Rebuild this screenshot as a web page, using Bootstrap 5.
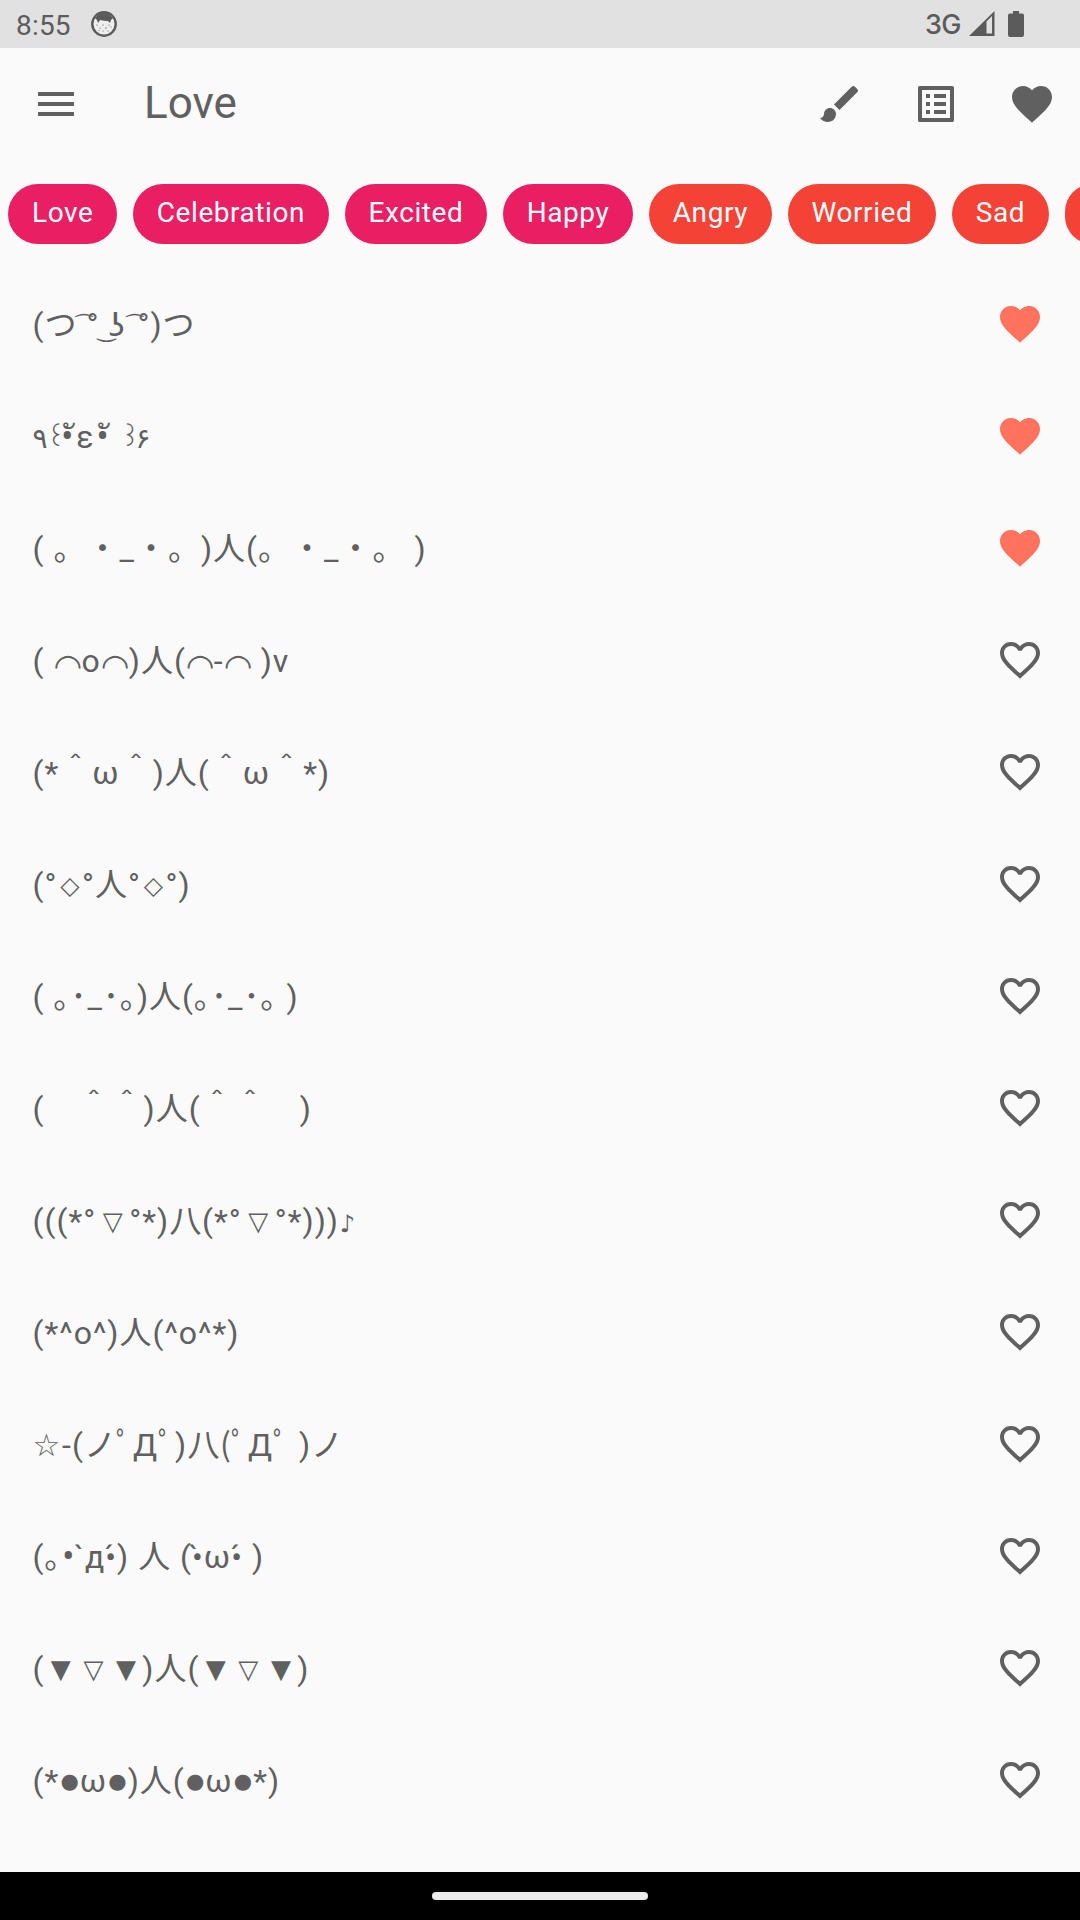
<!DOCTYPE html>
<html lang="en">
<head>
<meta charset="utf-8">
<meta name="viewport" content="width=device-width, initial-scale=1">
<title>Love</title>
<link href="https://cdn.jsdelivr.net/npm/bootstrap@5.3.0/dist/css/bootstrap.min.css" rel="stylesheet">
<style>
body{background:#fafafa;color:#606060;font-family:Roboto,"Noto Sans CJK JP","DejaVu Sans",sans-serif;width:1080px;height:1920px;overflow:hidden}
svg{display:block;fill:currentColor;flex:none}
.statusbar{height:48px;background:#e1e1e1;color:#5b5b5b;padding:0 56px 0 16px}
.clock{font-size:28px;letter-spacing:.2px;line-height:46px;padding-top:3px;width:75px}
.net{font-family:Inter,sans-serif;font-size:27px;font-weight:500;letter-spacing:-.5px;line-height:46px;padding-top:2px;margin-right:8px}
.battery{margin-left:13px}
.appbar{height:112px;padding:0 24px 0 32px}
.title{font-size:44px;line-height:110px;padding-bottom:2px;margin-left:64px}
.actions{gap:48px}
.chips{height:108px;padding:24px 8px;gap:15.5px}
.chip{height:60px;border-radius:30px;line-height:58px;font-size:28px;letter-spacing:.56px;padding:0 24px;color:#fff;background:#e91e63;flex:none;white-space:nowrap}
.chip-r{background:#f44336}
.item{height:112px;padding:0 36px 0 32.6px}
.face{font-size:32px;letter-spacing:1px;line-height:48px;padding-top:2px;white-space:pre;text-spacing-trim:space-all;direction:ltr;unicode-bidi:isolate}
.face span{display:inline-block;line-height:0;text-align:center;letter-spacing:0;white-space:pre}
.fav{color:#ff725e}
.dj{font-family:"DejaVu Sans"}
.face .sc{font-family:"Noto Sans CJK SC";width:33px}
.face .arc{width:28px;font-size:33px;vertical-align:-5px}
.face .dia{width:24.6px;font-size:25px;vertical-align:2px}
.face .ball{width:20.5px;font-size:21px;vertical-align:4px}
.face .star{width:29.5px;font-size:31px;text-align:left}
.face .note{width:17px;font-size:24px}
.face .tri{width:33px;font-size:26px;vertical-align:2px}
.face .tri-s{width:32.6px}
.face .tie{width:9px;font-size:20px;vertical-align:4px;text-align:left}
.face .smile{width:9px;font-size:22px;vertical-align:-1px;text-align:left}
.face .glot{width:20px;text-align:left}
.face .tick{width:11px;margin-left:-1px;text-align:left}
.face .w13{width:13px;font-size:28px}
.face .w15{width:15px;font-size:26px;vertical-align:2px}
.face .w17{width:16px}
.face .w21{width:22px}
.face .w13b{width:14px}
.face .hook{width:0;margin-left:-8px;margin-right:8px;text-align:left}
.face .gap{width:11px}
.face .big{font-size:36px;width:13.400px;vertical-align:-1px}
.home{height:48px}
.pill{width:216px;height:8px;border-radius:4px;background:#ebebeb}
</style>
</head>
<body class="d-flex flex-column">
<svg width="0" height="0" class="position-absolute"><defs>
<path id="full" d="M12 21.35l-1.45-1.32C5.4 15.36 2 12.28 2 8.5 2 5.42 4.42 3 7.5 3c1.74 0 3.41.81 4.5 2.09C13.09 3.81 14.76 3 16.5 3 19.58 3 22 5.42 22 8.5c0 3.78-3.4 6.86-8.55 11.54L12 21.35z"/>
<path id="line" d="M16.5 3c-1.74 0-3.41.81-4.5 2.09C10.91 3.81 9.24 3 7.5 3 4.42 3 2 5.42 2 8.5c0 3.78 3.4 6.86 8.55 11.54L12 21.35l1.45-1.32C18.6 15.36 22 12.28 22 8.5 22 5.42 19.58 3 16.5 3zm-4.4 15.55l-.1.1-.1-.1C7.14 14.24 4 11.39 4 8.5 4 6.5 5.5 5 7.5 5c1.54 0 3.04.99 3.57 2.36h1.87C13.46 5.99 14.96 5 16.5 5c2 0 3.5 1.5 3.5 3.5 0 2.89-3.14 5.74-7.9 10.05z"/>
</defs></svg>
<header class="statusbar d-flex align-items-center flex-shrink-0">
<div class="clock">8:55</div>
<svg width="26" height="26" viewBox="0 0 26 26"><circle cx="13" cy="13" r="11.7" fill="#eee" stroke="#5b5b5b" stroke-width="2.4"/><path d="M4 7Q13-3 22 7l-2 2-1 3-2-2Q13 10 9 9l-2 3-1-3z"/><g><circle cx="6" cy="14" r=".6"/><circle cx="9" cy="17" r=".6"/><circle cx="12" cy="14" r=".6"/><circle cx="15" cy="17" r=".7"/><circle cx="18" cy="14" r=".6"/><circle cx="20" cy="16" r=".5"/><circle cx="12" cy="20" r=".6"/><circle cx="17" cy="20" r=".5"/><circle cx="8" cy="19.500" r=".5"/></g></svg>
<div class="net ms-auto">3G</div>
<svg width="26" height="26" viewBox="0 0 26 26"><path d="M0 25L25.500 0v25zM17.500 10.500V22.500H23V5z" fill-rule="evenodd"/></svg>
<svg class="battery" width="16" height="26" viewBox="0 0 16 26"><path d="M5 0h6v2.500h3q2 0 2 2V24q0 2-2 2H2q-2 0-2-2V4.500q0-2 2-2h3z"/></svg>
</header>
<nav class="appbar d-flex align-items-center flex-shrink-0">
<svg width="48" height="48" viewBox="0 0 24 24"><path d="M3 18h18v-2H3v2zm0-5h18v-2H3v2zm0-7v2h18V6H3z"/></svg>
<div class="title">Love</div>
<div class="actions d-flex ms-auto">
<svg width="48" height="48" viewBox="0 0 24 24"><path d="M7 14c-1.660 0-3 1.340-3 3 0 1.310-1.160 2-2 2 .92 1.220 2.490 2 4 2 2.210 0 4-1.790 4-4 0-1.660-1.340-3-3-3zm13.710-9.370l-1.340-1.340c-.39-.39-1.020-.39-1.410 0L9 12.250 11.750 15l8.960-8.960c.39-.39.39-1.020 0-1.410z"/></svg>
<svg width="48" height="48" viewBox="0 0 24 24"><path d="M19 5v14H5V5h14m1.100-2H3.900c-.5 0-.9.4-.9.9v16.200c0 .4.4.9.9.9h16.200c.4 0 .9-.5.9-.9V3.900c0-.5-.5-.9-.9-.9zM11 7h6v2h-6V7zm0 4h6v2h-6v-2zm0 4h6v2h-6zM7 7h2v2H7zm0 4h2v2H7zm0 4h2v2H7z"/></svg>
<svg width="48" height="48" viewBox="0 0 24 24"><use href="#full"/></svg>
</div>
</nav>
<div class="chips d-flex flex-shrink-0 overflow-hidden">
<div class="chip">Love</div><div class="chip">Celebration</div><div class="chip">Excited</div><div class="chip">Happy</div><div class="chip chip-r">Angry</div><div class="chip chip-r">Worried</div><div class="chip chip-r">Sad</div><div class="chip chip-r">&nbsp;</div>
</div>
<main class="flex-grow-1 overflow-hidden">
<div class="item d-flex align-items-center justify-content-between"><div class="face">(つ<span class="tie dj">&nbsp;͡</span>°<span class="smile dj">&nbsp;͜</span><span class="glot dj">ʖ</span><span class="tie dj">&nbsp;͡</span>°)つ</div><svg class="fav" width="48" height="48" viewBox="0 0 24 24"><use href="#full"/></svg></div>
<div class="item d-flex align-items-center justify-content-between"><div class="face"><span class="w13">٩</span><span class="w15">꒰</span><span class="w17 big">•</span><span class="hook">&nbsp;ั</span><span class="w21">ε</span><span class="w13b big">•</span><span class="hook">&nbsp;ั</span><span class="gap"> </span><span class="w15">꒱</span><span class="w13">۶</span></div><svg class="fav" width="48" height="48" viewBox="0 0 24 24"><use href="#full"/></svg></div>
<div class="item d-flex align-items-center justify-content-between"><div class="face">( 。・_・。)人(。・_・。 )</div><svg class="fav" width="48" height="48" viewBox="0 0 24 24"><use href="#full"/></svg></div>
<div class="item d-flex align-items-center justify-content-between"><div class="face">( <span class="arc dj">◠</span>o<span class="arc dj">◠</span>)人(<span class="arc dj">◠</span>-<span class="arc dj">◠</span> )v</div><svg width="48" height="48" viewBox="0 0 24 24"><use href="#line"/></svg></div>
<div class="item d-flex align-items-center justify-content-between"><div class="face">(*＾ω＾)人(＾ω＾*)</div><svg width="48" height="48" viewBox="0 0 24 24"><use href="#line"/></svg></div>
<div class="item d-flex align-items-center justify-content-between"><div class="face">(°<span class="dia dj">◇</span>°人°<span class="dia dj">◇</span>°)</div><svg width="48" height="48" viewBox="0 0 24 24"><use href="#line"/></svg></div>
<div class="item d-flex align-items-center justify-content-between"><div class="face">( ｡･_･｡)人(｡･_･｡ )</div><svg width="48" height="48" viewBox="0 0 24 24"><use href="#line"/></svg></div>
<div class="item d-flex align-items-center justify-content-between"><div class="face">(　＾＾)人(＾＾　)</div><svg width="48" height="48" viewBox="0 0 24 24"><use href="#line"/></svg></div>
<div class="item d-flex align-items-center justify-content-between"><div class="face">(((*°<span class="tri dj">▽</span>°*)<span class="sc">八</span>(*°<span class="tri dj">▽</span>°*)))<span class="note dj">♪</span></div><svg width="48" height="48" viewBox="0 0 24 24"><use href="#line"/></svg></div>
<div class="item d-flex align-items-center justify-content-between"><div class="face">(*^o^)人(^o^*)</div><svg width="48" height="48" viewBox="0 0 24 24"><use href="#line"/></svg></div>
<div class="item d-flex align-items-center justify-content-between"><div class="face"><span class="star dj">☆</span>-(ノﾟДﾟ)<span class="sc">八</span>(ﾟДﾟ )ノ</div><svg width="48" height="48" viewBox="0 0 24 24"><use href="#line"/></svg></div>
<div class="item d-flex align-items-center justify-content-between"><div class="face">(｡<span class="big">•</span><span class="tick">`</span>д•́) 人 (•̀ω•́ )</div><svg width="48" height="48" viewBox="0 0 24 24"><use href="#line"/></svg></div>
<div class="item d-flex align-items-center justify-content-between"><div class="face">(<span class="tri tri-s dj">▼</span><span class="tri tri-s dj">▽</span><span class="tri tri-s dj">▼</span>)人(<span class="tri tri-s dj">▼</span><span class="tri tri-s dj">▽</span><span class="tri tri-s dj">▼</span>)</div><svg width="48" height="48" viewBox="0 0 24 24"><use href="#line"/></svg></div>
<div class="item d-flex align-items-center justify-content-between"><div class="face">(*<span class="ball dj">●</span>ω<span class="ball dj">●</span>)人(<span class="ball dj">●</span>ω<span class="ball dj">●</span>*)</div><svg width="48" height="48" viewBox="0 0 24 24"><use href="#line"/></svg></div>
</main>
<footer class="home bg-black d-flex justify-content-center align-items-center flex-shrink-0"><div class="pill"></div></footer>
<script src="https://cdn.jsdelivr.net/npm/bootstrap@5.3.0/dist/js/bootstrap.bundle.min.js"></script>
</body>
</html>
